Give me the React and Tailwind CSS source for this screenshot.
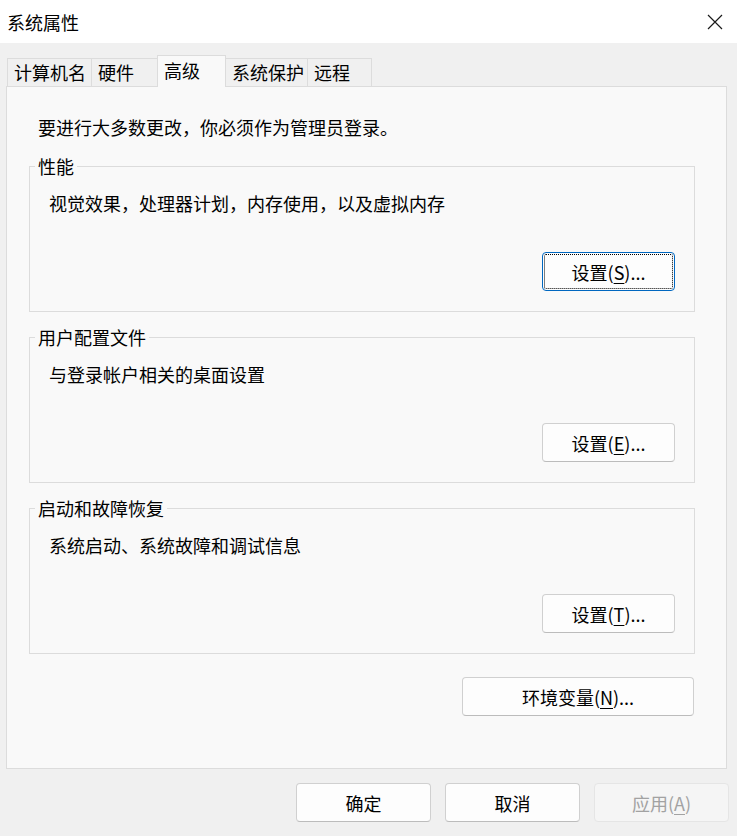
import React from "react";

const font = { fontFamily: '"Noto Sans CJK SC", "Noto Sans", sans-serif' };

function Btn({ children, focused, disabled, className = "" }) {
  let cls =
    "h-[39px] rounded-[4px] border text-[18px] leading-[24px] flex items-center justify-center ";
  if (focused) {
    cls +=
      "border-[#0067c0] bg-[#fdfdfd] text-black outline outline-1 outline-dotted outline-black outline-offset-[-3px] ";
  } else if (disabled) {
    cls += "border-[#e5e5e5] bg-[#f5f5f5] text-[#a2a2a2] ";
  } else {
    cls += "border-[#d0d0d0] border-b-[#bcbcbc] bg-[#fdfdfd] text-black ";
  }
  return <div className={cls + className}>{children}</div>;
}

function Group({ title, desc, btn }) {
  return (
    <fieldset className="w-[666px] h-[158px] border border-[#dcdcdc] flex flex-col">
      <legend className="ml-[5px] px-[3px] text-[18px] leading-[24px] text-black">{title}</legend>
      <div className="pl-[19px] pt-[13px] text-[18px] leading-[24px] text-black">{desc}</div>
      <div className="flex justify-end pr-[19px] mt-[37px]">{btn}</div>
    </fieldset>
  );
}

function U({ children }) {
  return <span className="underline underline-offset-[3px] decoration-1">{children}</span>;
}

export default function App() {
  const tabs = [
    { t: "计算机名", w: "w-[85px]" },
    { t: "硬件", w: "w-[67px]" },
    { t: "高级", w: "w-[69px]", active: true },
    { t: "系统保护", w: "w-[83px]" },
    { t: "远程", w: "w-[65px]" },
  ];
  return (
    <div className="w-[737px] h-[836px] bg-[#f0f0f0] overflow-hidden text-black" style={font}>
      <div className="h-[43px] bg-white flex items-center justify-between pl-[7px] pr-[14px]">
        <span className="text-[18px] leading-[24px]">系统属性</span>
        <svg width="16" height="16" viewBox="0 0 16 16">
          <path d="M1 1 L15 15 M15 1 L1 15" stroke="#1a1a1a" strokeWidth="1.2" fill="none" />
        </svg>
      </div>
      <div className="mt-[12px] flex items-end pl-[7px] relative z-10 -mb-px">
        {tabs.map((tb, i) =>
          tb.active ? (
            <div
              key={i}
              className={`${tb.w} h-[32px] -ml-px border-l border-t border-r border-[#dcdcdc] bg-[#f9f9f9] pl-[6px] pt-[2px] text-[18px] leading-[24px] whitespace-nowrap`}
            >
              {tb.t}
            </div>
          ) : (
            <div
              key={i}
              className={`${tb.w} h-[29px] ${i > 0 ? "-ml-px" : ""} border border-[#dcdcdc] bg-[#f0f0f0] pl-[6px] pt-[1px] text-[18px] leading-[24px] whitespace-nowrap overflow-hidden`}
            >
              {tb.t}
            </div>
          )
        )}
      </div>
      <div className="ml-[6px] w-[721px] h-[683px] border border-[#dcdcdc] bg-[#f9f9f9] pl-[22px] pt-[28px] flex flex-col">
        <div className="pl-[9px] text-[18px] leading-[24px]">要进行大多数更改，你必须作为管理员登录。</div>
        <div className="mt-[15px] flex flex-col gap-[13px]">
          <Group
            title="性能"
            desc="视觉效果，处理器计划，内存使用，以及虚拟内存"
            btn={
              <Btn focused className="w-[133px]">
                设置(<U>S</U>)...
              </Btn>
            }
          />
          <Group
            title="用户配置文件"
            desc="与登录帐户相关的桌面设置"
            btn={
              <Btn className="w-[133px]">
                设置(<U>E</U>)...
              </Btn>
            }
          />
          <Group
            title="启动和故障恢复"
            desc="系统启动、系统故障和调试信息"
            btn={
              <Btn className="w-[133px]">
                设置(<U>T</U>)...
              </Btn>
            }
          />
        </div>
        <div className="mt-[23px] w-[666px] flex justify-end pr-[1px]">
          <Btn className="w-[232px]">
            环境变量(<U>N</U>)...
          </Btn>
        </div>
      </div>
      <div className="mt-[14px] flex justify-end gap-[14px] pr-[8px]">
        <Btn className="w-[135px]">确定</Btn>
        <Btn className="w-[135px]">取消</Btn>
        <Btn disabled className="w-[135px]">
          应用(<U>A</U>)
        </Btn>
      </div>
    </div>
  );
}
